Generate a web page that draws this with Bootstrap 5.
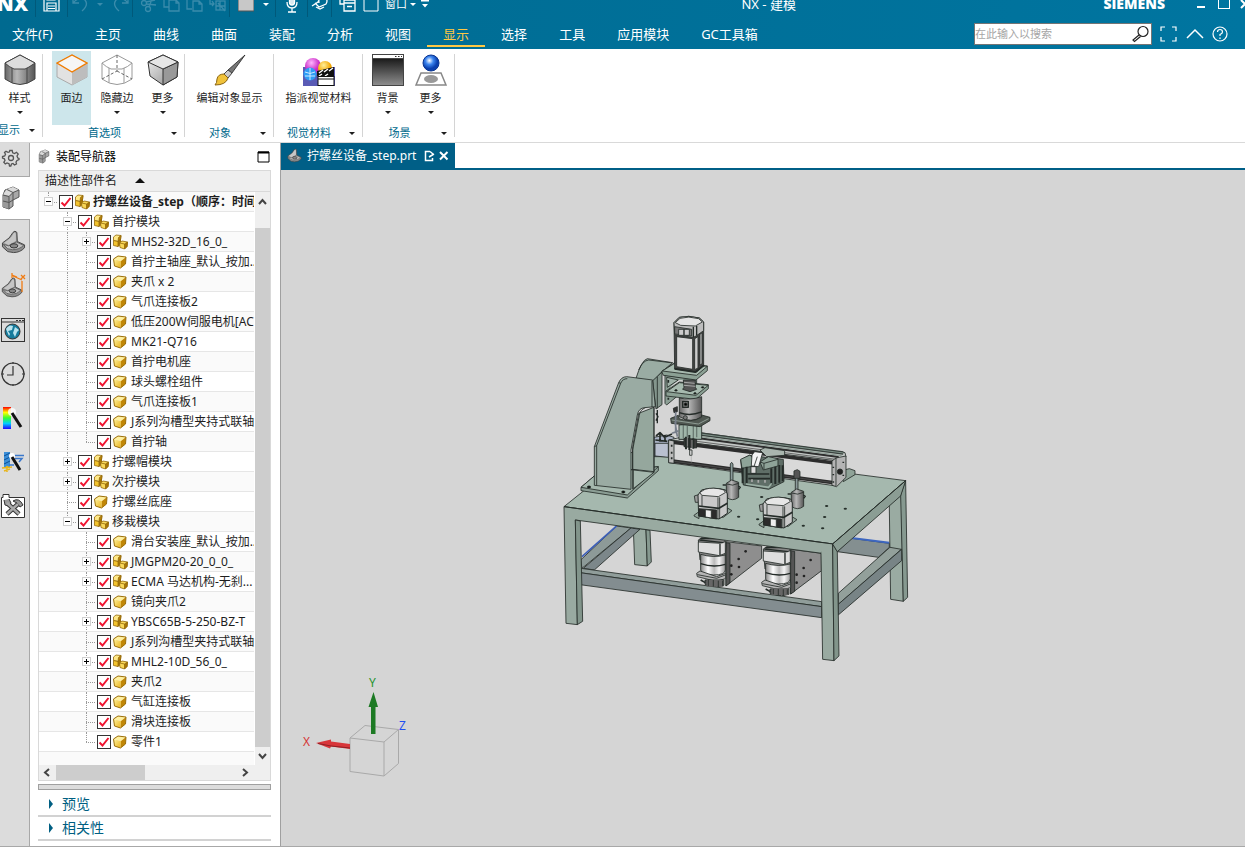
<!DOCTYPE html>
<html lang="zh-CN">
<head>
<meta charset="utf-8">
<meta name="viewport" content="width=device-width, initial-scale=1">
<title>NX - 建模</title>
<link href="https://cdn.jsdelivr.net/npm/bootstrap@5.3.0/dist/css/bootstrap.min.css" rel="stylesheet">
<style>
:root{--nx-teal:#006e94;--nx-deep:#005f87;--nx-gold:#ffc844;--nx-rail:#dcdcdc}
body{font-family:"Noto Sans","Noto Sans CJK SC",sans-serif;font-size:12px;line-height:16px;color:#1e1e1e;background:#fff;overflow:hidden}
button{font:inherit;color:inherit;background:none;border:0;padding:0}
svg{display:block;flex:none}
.app-shell{min-height:100vh}
.app-head{background:linear-gradient(90deg,#006a90,#0075a0);overflow:hidden;color:#fff}
.title-bar{height:30px;margin-top:-11px}
.brand-nx{font:800 20px/26px "Open Sans",sans-serif;width:34px;margin-left:-3px}
.brand-co{font:800 14px/16px "Open Sans",sans-serif}
.app-name{font-size:13px}
.q-sep{width:1px;height:20px;background:#00597a;align-self:flex-end}
.q-btn{width:23px;height:20px;display:flex;align-items:center;justify-content:center}
.q-btn.dim{color:#3a8cac}
.q-drop{width:18px}
.q-text{font-size:11px;width:28px}
.tiny-caret{width:0;height:0;border:3px solid transparent;border-top-color:currentColor;border-bottom:0}
.menu-bar{height:30px}
.menu-tab{color:#fff;font-size:13px;line-height:18px;height:28px;padding:6px 16px 2px;border-bottom:2px solid transparent;text-decoration:none;white-space:nowrap}
.menu-tab.first{padding-left:12px;width:79px}
.menu-tab.on{color:var(--nx-gold);border-color:var(--nx-gold)}
.find-box{width:178px;height:22px;background:#fff;border:1px solid #757575}
.find-box input{border:0;padding:0;font-size:11px;min-width:0;outline:0;color:#333}
.find-box input::placeholder{color:#a5a5a5;opacity:1}
.menu-tools{padding-right:17px}
.ribbon{height:94px;border-bottom:1px solid #d9d9d9;padding-top:2px}
.r-group{height:87px;position:relative}
.r-group::after{content:"";width:1px;background:#d4d4d4;position:absolute;right:0;top:3px;bottom:1px}
.g-a{width:43px}.g-b{width:142px}.g-c{width:89px}.g-d{width:92px}
.r-btn{height:74px;padding-top:3px;font-size:11px;display:flex;flex-direction:column;align-items:center;white-space:nowrap;min-width:39px}
.r-btn.wide{width:46px}
.r-btn span{margin-top:4px}
.r-btn i{margin-top:5px}
.r-btn.on{background:#cde6eb}
.r-row{gap:3px;padding-left:9px}
.r-row.tight{gap:4px;padding-left:5px}
.r-foot{color:#00698c;font-size:11px;height:16px;line-height:16px;white-space:nowrap}
.r-foot span{padding-right:5px}
.r-foot i{color:#1e1e1e;margin-right:8px}
.g-a .r-btn{width:39px}
.g-a .r-foot span{margin-left:-2px}
.rail{width:30px;background:var(--nx-rail);border-right:1px solid #a8a8a8}
.rail-btn{height:44px;width:29px;display:flex;align-items:center;padding-left:1px}
.rail-btn.top{height:34px;border-bottom:1px solid #a8a8a8;padding-bottom:3px}
.rail-btn.on{background:#fff;height:43px;width:30px;border-bottom:1px solid #a8a8a8}
.side{width:251px;border-right:1px solid #a0a0a0;padding:0 9px 0 8px}
.side-title{height:27px;gap:6px;color:#000}
.tree-box{border:1px solid #d9d9d9}
.tree-head{height:21px;background:#efefef;border-bottom:1px solid #d9d9d9;padding:0 6px;gap:18px}
.tree-list{min-width:0;background:#fafafa;overflow:hidden}
.t-row{height:20px;border-bottom:1px solid #e6e6e6;background:#fff;white-space:nowrap;overflow:hidden}
.t-row:nth-child(odd){background:#fafafa}
.t-cell{width:19px;height:20px;flex:none;position:relative;display:flex;align-items:center;justify-content:center}
.t-cell.v::before,.t-cell.l::before{content:"";position:absolute;left:9px;top:0;bottom:0;border-left:1px dotted #9a9a9a}
.t-cell.l::before{bottom:10px}
.t-cell.h::after{content:"";position:absolute;left:9px;right:1px;top:10px;border-top:1px dotted #9a9a9a}
.t-exp{width:9px;height:9px;background:#fff;border:1px solid #d0d0d0;position:relative;z-index:1;display:flex;align-items:center;justify-content:center}
.t-check{appearance:none;width:14px;height:14px;flex:none;margin:0 1px;border:1px solid #333;background:#fff}
.t-check:checked{background:#fff url("data:image/svg+xml,%3Csvg xmlns='http://www.w3.org/2000/svg' viewBox='0 0 12 12'%3E%3Cpath d='M1.5 6.5 4.5 9.5 10.5 2' fill='none' stroke='%23f0142f' stroke-width='2'/%3E%3C/svg%3E") center/12px no-repeat}
.t-row label{margin-left:3px}
.t-row.root{font-weight:700}
.v-scroll{width:17px;background:#efefef;height:573px;border-left:1px solid #fff}
.v-thumb{width:15px;height:519px;background:#cdcdcd}
.h-scroll{height:15px;background:#efefef;padding:0 3px}
.h-thumb{width:89px;height:15px;background:#cdcdcd}
.arrow-cell{width:14px;height:18px;display:flex;align-items:center;justify-content:center}
.splitter{height:6px;background:var(--nx-rail);border:1px solid #a0a0a0;margin:3px 0}
.fold{height:24px;font-size:14px;line-height:20px;color:#005f82;border-bottom:2px solid #d2d2d2;padding-left:10px}
.doc-tab{background:var(--nx-deep);color:#fff;width:174px;height:25px;padding-left:6px}
.doc-bar{border-bottom:2px solid var(--nx-deep)}
.scene{background:#d5d5d5;border-bottom:1px solid #a8a8a8;min-height:0}
.scene svg{width:100%;height:100%}
.work{margin-bottom:12px}
.work-left{border-bottom:1px solid #a8a8a8}
</style>
</head>
<body>
<svg width="0" height="0" class="position-absolute" aria-hidden="true">
<defs>
<linearGradient id="gold" x1="0" y1="0" x2="1" y2="1"><stop offset="0" stop-color="#fff3a0"/><stop offset="1" stop-color="#e9b21c"/></linearGradient>
<linearGradient id="steel" x1="0" y1="0" x2="1" y2="0"><stop offset="0" stop-color="#666"/><stop offset=".4" stop-color="#b8b8b8"/><stop offset="1" stop-color="#555"/></linearGradient>
<linearGradient id="chrome" x1="0" y1="0" x2="1" y2="0"><stop offset="0" stop-color="#888"/><stop offset=".3" stop-color="#fff"/><stop offset=".55" stop-color="#bbb"/><stop offset=".75" stop-color="#f4f4f4"/><stop offset="1" stop-color="#999"/></linearGradient>
<linearGradient id="cub" x1="0" y1="0" x2="1" y2="1"><stop offset="0" stop-color="#f2f2f2"/><stop offset="1" stop-color="#8c8c8c"/></linearGradient>
<linearGradient id="night" x1="0" y1="0" x2="0" y2="1"><stop offset="0" stop-color="#1c1c1c"/><stop offset="1" stop-color="#8d8d8d"/></linearGradient>
<linearGradient id="hue" x1="0" y1="0" x2="0" y2="1"><stop offset="0" stop-color="#f00"/><stop offset=".25" stop-color="#ff0"/><stop offset=".5" stop-color="#3f3"/><stop offset=".75" stop-color="#0cf"/><stop offset="1" stop-color="#20f"/></linearGradient>
<radialGradient id="ballb" cx=".4" cy=".35"><stop offset="0" stop-color="#fff"/><stop offset=".5" stop-color="#3b84ee"/><stop offset="1" stop-color="#0a3fae"/></radialGradient>
<radialGradient id="ballp" cx=".4" cy=".3"><stop offset="0" stop-color="#ffb5ff"/><stop offset="1" stop-color="#c92bc4"/></radialGradient>
<radialGradient id="bally" cx=".4" cy=".3"><stop offset="0" stop-color="#fff09a"/><stop offset="1" stop-color="#f3a500"/></radialGradient>
<symbol id="part" viewBox="0 0 16 16"><path d="M1.500 5 6 2 14 3 9 7Z" fill="#fff0a0"/><path d="M1.500 5 9 7 8.500 14 2.500 12Z" fill="url(#gold)"/><path d="M9 7 14 3 13.500 10 8.500 14Z" fill="#c08606"/><path d="M1.500 5 6 2 14 3 13.500 10 8.500 14 2.500 12Z" fill="none" stroke="#9b6e08"/></symbol>
<symbol id="kit" viewBox="0 0 16 16"><g stroke="#94690a" stroke-width=".8"><path d="M1.500 3 4 1 9 1.500 8.500 5.500 6 7.500 1.500 6.500Z" fill="#ffe987"/><path d="M6.500 3.500 9 1.500 8.500 5.500 6 7.500Z" fill="#b98308"/><path d="M1.500 6.500 6 7.500 8.500 5.500 8.500 10 6 12.500 1.500 11.500Z" fill="#f3c42f"/><path d="M6 7.500 8.500 5.500 8.500 10 6 12.500Z" fill="#a87605"/><path d="M7.500 9 10 7 15.500 8 15 12.500 12.500 15 8 13.500Z" fill="#f9d758"/><path d="M12.500 10 15.500 8 15 12.500 12.500 15Z" fill="#a87605"/><path d="M7.500 9 12.500 10" fill="none"/></g></symbol>
<symbol id="clip" viewBox="0 0 26 26"><path d="M1.500 14Q10 9 12.500 3 14.500 .5 16.500 3L17 12.500 24.500 16 24.500 19Q20 24 13 24L7 23 1.500 18Z" fill="#8f8f8f" stroke="#444"/><path d="M3 14Q11 9 13 4 15 2 15.500 5V12L8 16Z" fill="#c6c6c6"/><path d="M2.500 15.500 8 17 16 13 23.500 16.500Q19 21 12 21L7 20Z" fill="#c0c0c0" stroke="#555" stroke-width=".8"/><ellipse cx="13.500" cy="17" rx="4" ry="2.200" fill="#888" stroke="#333"/></symbol>
<symbol id="blocks" viewBox="0 0 20 24"><path d="M2 9 2 21 8 23 12 20 12 14 18 11 18 4 12 1 4 4Z" fill="#a8a8a8" stroke="#555"/><path d="M2 9 8 10.500 8 23 2 21Z" fill="#9a9a9a"/><path d="M2 8.500 6 3 12 1 18 4 12 6.500 8 10Z" fill="#dadada"/><path d="M2 9 8 10.500 12 6.500 18 4M8 10.500V23M2 15 8 16.500 12 14V6.500M6 3.500 12 6.500" fill="none" stroke="#555"/></symbol>
</defs>
</svg>

<div class="app-shell d-flex flex-column">
<header class="app-head">
  <div class="title-bar d-flex align-items-center">
    <div class="d-flex align-items-center">
      <span class="brand-nx">NX</span><span class="q-sep ms-1"></span>
      <button class="q-btn mx-1" aria-label="保存"><svg width="17" height="18" viewBox="0 0 17 18" fill="none" stroke="#fff" stroke-width="1.200"><path d="M1 1H14L16 3V16H1ZM4 8H13V16H4ZM5 11H12M5 13.500H12M4 1V5H12V1"/></svg></button>
      <span class="q-sep"></span>
      <button class="q-btn dim" aria-label="撤消"><svg width="18" height="18" viewBox="0 0 18 18" fill="none" stroke="currentColor" stroke-width="1.300"><path d="M2 2V8H8M2 8Q8 1 14 5Q18 10 11 16"/></svg></button>
      <button class="q-btn q-drop dim" aria-label="撤消列表"><i class="tiny-caret"></i></button>
      <button class="q-btn dim" aria-label="重做"><svg width="18" height="18" viewBox="0 0 18 18" fill="none" stroke="currentColor" stroke-width="1.300"><path d="M16 2V8H10M16 8Q10 1 4 5Q0 10 7 16"/></svg></button>
      <span class="q-sep"></span>
      <button class="q-btn dim ms-1" aria-label="剪切"><svg width="17" height="18" viewBox="0 0 17 18" fill="none" stroke="currentColor" stroke-width="1.300"><circle cx="4" cy="8" r="2.500"/><circle cx="8" cy="14" r="2.500"/><path d="M6 9 16 10M9 12 12 4M6 7 15 5"/></svg></button>
      <button class="q-btn dim" aria-label="复制"><svg width="18" height="18" viewBox="0 0 18 18" fill="none" stroke="currentColor" stroke-width="1.300"><path d="M6 12H1V1H8L11 4M6 5H13L16 8V16H6ZM13 5V8H16"/></svg></button>
      <button class="q-btn dim" aria-label="粘贴"><svg width="18" height="18" viewBox="0 0 18 18" fill="none" stroke="currentColor" stroke-width="1.300"><path d="M6 14H1V2H12V5M7 6H13L16 9V16H7ZM13 6V9H16M4 0H9V3H4Z"/></svg></button>
      <button class="q-btn dim" aria-label="移动"><svg width="18" height="18" viewBox="0 0 18 18" fill="none" stroke="currentColor" stroke-width="1.300"><path d="M1 2V9H5M3 6 5 9 3 11"/><rect x="7" y="6" width="9" height="9"/><path d="M7 11H16M11 6V15M9 8 16 16"/></svg></button>
      <span class="q-sep"></span>
      <button class="q-btn ms-1" aria-label="颜色"><svg width="16" height="18"><rect width="16" height="16" fill="#c8c8c8" stroke="#555"/></svg></button>
      <button class="q-btn q-drop" aria-label="颜色列表"><i class="tiny-caret"></i></button>
      <span class="q-sep"></span>
      <button class="q-btn mx-1" aria-label="语音"><svg width="14" height="18" viewBox="0 0 14 18" fill="none" stroke="#fff" stroke-width="1.300"><rect x="4.500" y="0" width="5" height="10" rx="2.500" fill="#d8e8ee"/><path d="M2 7Q2 13 7 13Q12 13 12 7M7 13V17M3 17H11"/></svg></button>
      <span class="q-sep"></span>
      <button class="q-btn" aria-label="触控"><svg width="18" height="18" viewBox="0 0 18 18" fill="none" stroke="#fff" stroke-width="1.300"><path d="M1 11 7 7 9 3M8 8Q7 1 12 2Q18 4 15 9L8 12 4 8M5 12 9 14 13 12" /></svg></button>
      <span class="q-sep"></span>
      <button class="q-btn ms-1" aria-label="切换窗口"><svg width="17" height="18" viewBox="0 0 17 18" fill="none" stroke="#fff" stroke-width="1.300"><path d="M5 9H1V0H14V5M5 5H16V16H5ZM5 8H16M8 11.500H13"/></svg></button>
      <button class="q-btn" aria-label="新窗口"><svg width="16" height="18" fill="none" stroke="#fff"><path d="M1 1H15V16H1ZM1 4H15"/></svg></button>
      <button class="q-text">窗口</button>
      <i class="tiny-caret"></i>
      <button class="q-btn q-drop" aria-label="自定义"><svg width="8" height="10" viewBox="0 0 8 10"><path d="M0 1H8V2.500H0ZM1 5H7L4 8.500Z" fill="#fff"/></svg></button>
    </div>
    <div class="app-name flex-grow-1 text-center">NX - 建模</div>
    <div class="d-flex align-items-center">
      <span class="brand-co">SIEMENS</span>
      <button class="q-btn ms-4" aria-label="最小化"><svg width="10" height="10"><rect x="1" y="7" width="8" height="2" fill="#fff"/></svg></button>
      <button class="q-btn me-1" aria-label="最大化"><svg width="12" height="12"><rect x=".5" y=".5" width="11" height="10" fill="none" stroke="#fff"/></svg></button>
      <button aria-label="关闭"><svg width="6" height="12"><path d="M2 2 6 6 2 10" fill="none" stroke="#fff" stroke-width="2"/></svg></button>
    </div>
  </div>
  <nav class="menu-bar d-flex align-items-start">
    <a class="menu-tab first" href="#">文件(F)</a><a class="menu-tab" href="#">主页</a><a class="menu-tab" href="#">曲线</a><a class="menu-tab" href="#">曲面</a><a class="menu-tab" href="#">装配</a><a class="menu-tab" href="#">分析</a><a class="menu-tab" href="#">视图</a><a class="menu-tab on" href="#">显示</a><a class="menu-tab" href="#">选择</a><a class="menu-tab" href="#">工具</a><a class="menu-tab" href="#">应用模块</a><a class="menu-tab" href="#">GC工具箱</a>
    <div class="menu-tools ms-auto d-flex align-items-center mt-1 gap-2">
      <div class="find-box d-flex align-items-center">
        <input class="flex-grow-1" type="text" aria-label="搜索" placeholder="在此输入以搜索">
        <svg width="20" height="18" viewBox="0 0 20 18" fill="none" stroke="#222" stroke-width="1.200"><circle cx="12" cy="6.500" r="5"/><path d="M8 10 2 15 3.500 16.500 9.500 11.500"/></svg>
      </div>
      <button aria-label="全屏"><svg width="18" height="18" fill="none" stroke="#fff" stroke-width="1.200"><path d="M1 6V2H5M12 2H16V6M16 12V16H12M5 16H1V12"/></svg></button>
      <button aria-label="收起功能区"><svg width="18" height="18" fill="none" stroke="#fff" stroke-width="1.500"><path d="M1 13 9 5 17 13"/></svg></button>
      <button aria-label="帮助"><svg width="16" height="18" fill="none" stroke="#fff" stroke-width="1.200"><circle cx="8" cy="9" r="7"/><path d="M5.500 7Q5.500 4.500 8 4.500T10.500 7Q10.500 8.500 8 9.500V11M8 12.500V14"/></svg></button>
    </div>
  </nav>
</header>

<section class="ribbon d-flex">
  <div class="r-group g-a d-flex flex-column overflow-hidden">
    <button class="r-btn"><svg width="32" height="32" viewBox="0 0 32 32"><path d="M1 9 16 1 31 9V25Q16 36 1 25Z" fill="url(#steel)" stroke="#444"/><path d="M1 9 16 1 31 9Q24 14 21 15H10Q5 13 1 9Z" fill="#ddd" stroke="#444"/><path d="M8 14V29M23 14V29" stroke="#444"/></svg><span>样式</span><i class="tiny-caret"></i></button>
    <div class="r-foot d-flex align-items-center justify-content-between"><span>显示</span><i class="tiny-caret"></i></div>
  </div>
  <div class="r-group g-b">
    <div class="r-row d-flex">
      <button class="r-btn on"><svg width="32" height="32" viewBox="0 0 32 32"><path d="M1 9 16 1 31 9V23L16 31 1 23Z" fill="#e2e2e2" stroke="#aaa"/><path d="M16 18V31L31 23V9Z" fill="#bdbdbd"/><path d="M1 9 16 1 31 9 16 18Z" fill="#f6f6f6" stroke="#f07c00" stroke-width="1.400"/></svg><span>面边</span></button>
      <button class="r-btn wide"><svg width="32" height="32" viewBox="0 0 32 32" fill="none" stroke="#999"><path d="M1 9 16 1 31 9V25Q16 36 1 25ZM1 9Q5 13 10 15H21Q27 13 31 9M8 14V29M23 14V29"/><path d="M16 1V17L1 25M16 17 31 25" stroke-dasharray="3 2" stroke="#666"/></svg><span>隐藏边</span><i class="tiny-caret"></i></button>
      <button class="r-btn"><svg width="32" height="32" viewBox="0 0 32 32" stroke="#333"><path d="M1 8 16 1 31 8 30 23 16 31 3 22Z" fill="url(#cub)"/><path d="M16 15 31 8 30 23 16 31Z" fill="#999"/><path d="M1 8 16 1 31 8 16 15Z" fill="#e6e6e6"/></svg><span>更多</span><i class="tiny-caret"></i></button>
    </div>
    <div class="r-foot d-flex align-items-center"><span class="flex-grow-1 text-center">首选项</span><i class="tiny-caret"></i></div>
  </div>
  <div class="r-group g-c">
    <button class="r-btn mx-auto"><svg width="32" height="32" viewBox="0 0 32 32"><path d="M31 1 18 19 14 16Z" fill="#777" stroke="#222" stroke-width=".8"/><path d="M14 16 18 19 14 24 10 20Z" fill="#c9c9c9" stroke="#444"/><path d="M10 20 14 24Q12 31 1 31Q3 29 3 25Q4 20 10 20Z" fill="#f0c23a" stroke="#8a6410"/></svg><span>编辑对象显示</span></button>
    <div class="r-foot d-flex align-items-center"><span class="flex-grow-1 text-center">对象</span><i class="tiny-caret"></i></div>
  </div>
  <div class="r-group g-c">
    <button class="r-btn mx-auto"><svg width="32" height="32" viewBox="0 0 32 32"><rect y="13" width="32" height="19" fill="#5a5bb5"/><circle cx="10" cy="12" r="8" fill="url(#ballp)"/><circle cx="22" cy="14" r="7" fill="url(#bally)"/><circle cx="7" cy="20" r="6.500" fill="#2e9cf5"/><path d="M2 18Q7 21 12 18M7 14V26M2 22H12" stroke="#cbeaff" fill="none"/><path d="M14 17 31 13V22H14Z" fill="#111"/><path d="M16 19 20 16M21 18 25 15M26 17 30 14M16 22 19 20M22 22 25 20" stroke="#fff" stroke-width="1.500"/><rect x="15" y="22.500" width="16" height="9" fill="#fff" stroke="#111"/><path d="M15 25H31" stroke="#111"/></svg><span>指派视觉材料</span></button>
    <div class="r-foot d-flex align-items-center"><span class="flex-grow-1 text-center">视觉材料</span><i class="tiny-caret"></i></div>
  </div>
  <div class="r-group g-d">
    <div class="r-row tight d-flex">
      <button class="r-btn"><svg width="32" height="32"><rect width="32" height="32" fill="#444"/><rect x="1" y="1" width="30" height="3" fill="#fff"/><path d="M23 2.500H24.500M26 2.500H27.500M29 2.500H30" stroke="#333"/><rect x="1" y="5" width="30" height="26" fill="url(#night)"/></svg><span>背景</span><i class="tiny-caret"></i></button>
      <button class="r-btn"><svg width="32" height="32"><path d="M6 19H26L31 31H1Z" fill="#fff" stroke="#888" stroke-width="1.500"/><ellipse cx="16" cy="25" rx="7" ry="4" fill="#999"/><circle cx="16" cy="9" r="8" fill="url(#ballb)" stroke="#0a3590"/></svg><span>更多</span><i class="tiny-caret"></i></button>
    </div>
    <div class="r-foot d-flex align-items-center"><span class="flex-grow-1 text-center">场景</span><i class="tiny-caret"></i></div>
  </div>
</section>

<main class="work d-flex flex-grow-1">
  <div class="work-left d-flex">
  <aside class="rail">
    <button class="rail-btn top" aria-label="设置"><svg width="22" height="22" viewBox="0 0 22 22" fill="none" stroke="#555" stroke-width="1.300"><circle cx="10" cy="11" r="2.500"/><path d="M8.800 3.500H11.200L11.700 5.800 13.600 6.600 15.500 5.300 17.200 7 16 9 16.800 11 18 11.500V12.500L16 13.500 15 15.200 15.500 17 13.500 18 12 16.500 10.500 17 9.800 19H8.500L8 16.700 6 16 4.300 17 2.800 15.300 4 13.500 3.400 11.800 1.500 11V9.500L3.700 9 4.500 7.200 3.500 5.500 5 4.200 7 5.400 8.300 5Z"/></svg></button>
    <button class="rail-btn on" aria-label="装配导航器"><svg width="22" height="24"><use href="#blocks" width="20" height="24"/></svg></button>
    <button class="rail-btn" aria-label="部件导航器"><svg width="25" height="26"><use href="#clip" width="25" height="26"/></svg></button>
    <button class="rail-btn" aria-label="重用库"><svg width="26" height="28"><use href="#clip" y="3" width="22" height="25"/><path d="M12 4 21 8M20 3 24 7M24 3 20 7M21 9V20M11 1V6M11 3 16 5" stroke="#f07c14" stroke-width="1.300" fill="none"/></svg></button>
    <button class="rail-btn" aria-label="浏览器"><svg width="24" height="24" fill="none" stroke="#333"><rect x=".5" y=".5" width="23" height="23"/><path d="M0 4H24M15 2.500H17M18 2.500H20M21 2.500H23"/><circle cx="11.500" cy="13.500" r="7.500" fill="#167b9c" stroke="#333"/><path d="M5 11Q8 6 12 8L11 12 7 13 9 16 8 18M14 9 18 12 16 14 14 19 12 15Z" fill="#b9e4ef" stroke="none"/></svg></button>
    <button class="rail-btn" aria-label="历史记录"><svg width="24" height="24" fill="none" stroke="#333" stroke-width="1.200"><circle cx="12" cy="12" r="11"/><path d="M12 4V13H6M12 0V2M12 22V24M0 12H3M21 12H24"/></svg></button>
    <button class="rail-btn" aria-label="颜色"><svg width="24" height="24"><rect x="2" y="1" width="8" height="22" fill="url(#hue)"/><circle cx="11" cy="6" r="4" fill="#fff" opacity=".8"/><path d="M11 7 20 21" stroke="#111" stroke-width="3"/></svg></button>
    <button class="rail-btn" aria-label="加工向导"><svg width="24" height="24"><rect x="3" y="2" width="6" height="15" fill="#3c8fd8"/><path d="M3 6 9 3M3 10 9 7M3 14 9 11" stroke="#0a4f97"/><path d="M12 5.500H23M14 8.500H21L18 12M8 15H13" stroke="#3a77cb" fill="none" stroke-width="1.500"/><path d="M1 18 11 17M3 21 9 19M6 16V22" stroke="#e8b51a" stroke-width="1.500"/><circle cx="11" cy="6" r="3" fill="#fff"/><path d="M11 7 19 20" stroke="#111" stroke-width="3"/></svg></button>
    <button class="rail-btn" aria-label="工具"><svg width="24" height="24" fill="none"><path d="M.5 23.500V3.500H2V.500H8V3.500H23.500V23.500Z" fill="#fff" stroke="#333"/><path d="M6 9 18 20M17 10 6 20" stroke="#333" stroke-width="4.500"/><path d="M3 6 4 11 8 12 10 9 8 5" fill="#999" stroke="#333"/><path d="M12 7Q18 3 22 11L19 13 16 9Z" fill="#999" stroke="#333"/><path d="M6 9 18 20M17 10 6 20" stroke="#aaa" stroke-width="2.500"/></svg></button>
  </aside>
  <section class="side">
    <div class="side-title d-flex align-items-center">
      <svg width="12" height="16"><use href="#blocks" width="12" height="15"/></svg><span class="flex-grow-1">装配导航器</span>
      <button aria-label="最大化面板"><svg width="14" height="12"><path d="M1 1H12V11H1Z" fill="none" stroke="#000"/><path d="M1 1.500H12" stroke="#000" stroke-width="2"/></svg></button>
    </div>
    <div class="tree-box">
      <div class="tree-head d-flex align-items-center"><span>描述性部件名</span><svg width="10" height="6"><path d="M0 5H10L5 0Z" fill="#111"/></svg></div>
      <div class="d-flex">
        <div class="tree-list flex-grow-1" id="tree"></div>
        <div class="v-scroll d-flex flex-column">
          <div class="arrow-cell"><svg width="9" height="7"><path d="M1 6 4.500 2 8 6" fill="none" stroke="#444" stroke-width="2"/></svg></div>
          <div class="v-thumb mt-auto"></div>
          <div class="arrow-cell"><svg width="9" height="7"><path d="M1 1 4.500 5 8 1" fill="none" stroke="#444" stroke-width="2"/></svg></div>
        </div>
      </div>
      <div class="h-scroll d-flex">
        <svg width="14" height="15"><path d="M7 4 3 7.500 7 11" fill="none" stroke="#444" stroke-width="2"/></svg>
        <div class="h-thumb"></div>
        <svg class="ms-auto me-3" width="14" height="15"><path d="M6 4 10 7.500 6 11" fill="none" stroke="#444" stroke-width="2"/></svg>
      </div>
    </div>
    <div class="splitter"></div>
    <button class="fold w-100 d-flex align-items-center gap-2"><svg width="6" height="10"><path d="M1 0V10L5 5Z" fill="#005f82"/></svg><span>预览</span></button>
    <button class="fold w-100 d-flex align-items-center gap-2"><svg width="6" height="10"><path d="M1 0V10L5 5Z" fill="#005f82"/></svg><span>相关性</span></button>
  </section>
  </div>

  <section class="flex-grow-1 d-flex flex-column">
    <div class="doc-bar d-flex">
      <div class="doc-tab d-flex align-items-center"><svg width="16" height="16" class="me-1"><use href="#clip" width="15" height="15"/></svg><span>拧螺丝设备_step.prt</span>
        <svg width="11" height="12" class="ms-2" fill="none" stroke="#fff" stroke-width="1.500"><path d="M6 1.500H1.500V10.500H8.500V8M6 1.500 9 4V5M5 7 10 4"/></svg>
        <button class="ms-1" aria-label="关闭文档"><svg width="10" height="10"><path d="M1 1 8.500 8.500M8.500 1 1 8.500" stroke="#fff" stroke-width="2"/></svg></button></div>
    </div>
    <div class="scene flex-grow-1">
<svg viewBox="281 170 964 676" preserveAspectRatio="xMidYMid meet" role="img" aria-label="拧螺丝设备模型">
<defs>
<g id="motor-low">
  <path d="M445 240 455 233H522L528 250V262L525 288 518 300 450 300Z" fill="#888"/>
  <path d="M445 246 510 250 526 245V280L508 287 445 276Z" fill="#dedede"/>
  <path d="M510 252V285M448 240 520 248M452 236H522" stroke-width="4"/>
  <path d="M452 283Q490 295 526 285V330Q526 345 490 345T452 330Z" fill="url(#chrome)"/>
  <path d="M452 311Q490 324 526 313" fill="none" stroke-width="4"/>
  <path d="M440 340 450 333 500 350 527 340V356L498 364 442 350Z" fill="#b5b5b5"/><path d="M442 344 500 355 526 345" fill="none"/>
  <path d="M465 360H522V376L495 382 465 373Z" fill="#555"/><path d="M473 362V376M487 364V380M500 364V380" stroke="#bbb"/>
  <path d="M452 360 466 368" stroke-width="5"/>
</g>
<g id="motor-top">
  <path d="M432 166 447 155V176L432 168ZM534 145 546 152 520 172H505Z" fill="#93a59b"/>
  <path d="M433 108 446 104V127H436Z" fill="#9b9b9b"/>
  <path d="M444 105 455 90Q490 80 527 90L532 102V160L507 177 446 168Z" fill="#c9c9c9" stroke-width="3"/>
  <path d="M450 97 465 88Q490 80 522 90L526 98 505 110 455 106Z" fill="#e6e6e6"/>
  <path d="M446 138 507 145 532 130" fill="none" stroke-width="5"/>
  <path d="M447 146 500 150V177L447 168Z" fill="#2b2b2b"/><path d="M466 149 484 151V174L466 171Z" fill="#eee"/>
  <path d="M504 112V177M509 112V177M456 108V140" fill="none"/>
</g>
<g id="post">
  <path d="M541 12 545 7 549 12V66H541Z" fill="#8c9c9c"/><path d="M529 70 545 60 566 67V112Q548 126 529 112Z" fill="url(#steel)"/><path d="M530 72Q548 80 566 70" fill="none"/><path d="M565 78 571 82 566 88M518 75H528" fill="none" stroke-width="4"/>
</g>
</defs>
<g transform="translate(550 300) scale(.3333)" stroke="#242b28" stroke-width="2.500" stroke-linejoin="round">
 <g transform="translate(0 480)">
  <path d="M250 203 288 209 292 318 254 314Z" fill="#9aaba2"/><path d="M288 209 300 211 304 306 292 318Z" fill="#869990"/>
  <path d="M92 300 200 198 243 204 96 325Z" fill="#8d9a98"/><path d="M243 204 270 208 133 330 100 325Z" fill="#7c878a"/>
  <path d="M96 290 200 198" stroke="#3d5fb8" stroke-width="5"/>
  <path d="M862 275 905 235 1018 250V262L985 292Z" fill="#848f90"/><path d="M905 234 1018 248" stroke="#3d66c0" stroke-width="6"/>
  <path d="M1018 135 1054 105 1060 424 1022 418Z" fill="#9aaba2"/><path d="M1052 105 1067 62 1073 412 1060 424Z" fill="#869990"/>
  <path d="M865 400 1020 262 1054 268 865 433Z" fill="#93a09b"/><path d="M865 433 1055 268V302L865 465Z" fill="#788486"/>
  <path d="M528 245 635 258V295L528 378Z" fill="#8e8e8e"/><path d="M722 268 815 280V332L722 402Z" fill="#8e8e8e"/>
  <path d="M528 248 540 250V368L528 378ZM722 272 734 274V394L722 402Z" fill="#555"/>
  <g fill="#222" stroke="none"><circle cx="587" cy="274" r="4"/><circle cx="566" cy="297" r="4"/><circle cx="544" cy="317" r="4"/><circle cx="567" cy="321" r="4"/><circle cx="544" cy="343" r="4"/><circle cx="782" cy="300" r="4"/><circle cx="761" cy="324" r="4"/><circle cx="740" cy="344" r="4"/><circle cx="762" cy="348" r="4"/><circle cx="740" cy="368" r="4"/></g>
  <use href="#motor-low"/><use href="#motor-low" x="195" y="27"/>
  <path d="M82 337 92 325 815 425V440Z" fill="#909d9a"/><path d="M82 337 815 440V473L82 373Z" fill="#838d90"/>
  <path d="M470 360H520V380H470ZM665 385H715V405H665Z" fill="#666" stroke="none"/><path d="M475 360V378M490 360V380M505 362V382M518 362V378M670 387V403M685 387V405M700 388V407M712 388V403"/>
  <path d="M42 140 268-41 1067 62 848 252Z" fill="#a5b8ae"/>
  <path d="M42 140 848 252 846 285 815 280 76 180 82 494 48 490Z" fill="#99aaa1"/>
  <path d="M76 180 91 183 98 484 82 494Z" fill="#82958b"/>
  <path d="M813 278 848 252 852 602 818 598Z" fill="#99aaa1" /><path d="M848 252 862 275 867 588 852 602Z" fill="#82958b"/>
  <path d="M814 280V250L846 252V282Z" fill="#99aaa1" stroke="none"/>
  <path d="M848 252 1067 62 1052 108 862 275Z" fill="#8b9d94"/><path d="M42 140 848 252 1067 62" fill="none"/>
  <g fill="#26302b" stroke="none"><ellipse cx="566" cy="170" rx="5" ry="3"/><ellipse cx="623" cy="178" rx="5" ry="3"/><ellipse cx="760" cy="197" rx="5" ry="3"/><ellipse cx="818" cy="205" rx="5" ry="3"/><ellipse cx="830" cy="138" rx="5" ry="3"/><ellipse cx="886" cy="146" rx="5" ry="3"/><ellipse cx="824" cy="171" rx="5" ry="3"/><ellipse cx="635" cy="111" rx="5" ry="3"/></g>
 </g>
 <!-- linear axis -->
 <path d="M875 512 898 506 915 512V524L880 545Z" fill="#8fa398"/>
 <path d="M312 412 350 405 372 412V470H312Z" fill="#a9b2c4"/><path d="M315 430H355V472L315 468Z" fill="#b9c0d0"/>
 <path d="M318 408 330 398 344 412 366 402M316 420 352 424M330 400V425M345 405V422" fill="none" stroke-width="5"/>
 <path d="M358 420 450 398 885 458 888 470 855 484Z" fill="#c4c8c6"/>
 <path d="M450 402 880 459" stroke="#39423e" stroke-width="10"/><path d="M450 402 880 459" stroke="#7f938a" stroke-width="3"/><path d="M425 412 866 471" stroke="#2e2e2e" stroke-width="6"/><path d="M450 410 875 467" stroke="#8a9c93" stroke-width="3"/><path d="M385 417 858 478" stroke="#555"/>
 <path d="M356 420 856 482 860 558 356 488Z" fill="#d9d9d9"/>
 <path d="M362 426 854 489" stroke="#2c2c2c" stroke-width="11"/><path d="M357 482 858 549" stroke="#2c2c2c" stroke-width="11"/><path d="M357 482 858 549" stroke="#666" stroke-width="1.500"/>
 <path d="M356 420 372 423V490L356 488Z" fill="#bcbcbc"/><path d="M365 434V440M365 455V461M365 472V478" stroke-width="5"/>
 <path d="M846 483 858 474 888 468V532L860 560 846 556Z" fill="#b4b4b4"/><path d="M858 474V558" /><circle cx="870" cy="515" r="8" fill="#222"/><path d="M850 500V504M850 522V526M850 544V548M880 485V489M880 524V528" stroke-width="5"/>
 <!-- carriage -->
 <path d="M572 480 598 466 700 478 702 545 656 568 580 555Z" fill="#5f6e67"/>
 <path d="M572 478 600 465 612 478V498L576 505Z" fill="#8ea398"/><path d="M630 486 655 470 684 476V498L640 510Z" fill="#8ea398"/><path d="M630 486 642 490 684 478M642 490V508" fill="none"/>
 <path d="M630 450 645 443 704 452V466L650 470Z" fill="#a9b5ae"/><path d="M606 465 614 455 638 458 626 500 604 498Z" fill="#f4f4f4"/><path d="M622 470 612 500M603 500H618V520H603Z" fill="#ddd"/>
 <path d="M578 503V550M590 500V550M664 505V555M676 500V552M688 495V548M698 496V544" stroke-width="6"/><path d="M592 522H658M595 536H660" stroke-width="5"/><path d="M606 538V546M625 540V548M645 540V548" stroke="#aaa" stroke-width="5"/><path d="M588 552 656 562 665 550" fill="none" stroke="#9bb0a5" stroke-width="5"/>
 <!-- column -->
 <path d="M93 562 140 522 325 500V512L232 594 93 572Z" fill="#8b9d94"/><path d="M93 562 140 522 325 500 232 585Z" fill="#a5b8ae"/>
 <ellipse cx="117" cy="561" rx="5" ry="3"/><ellipse cx="220" cy="576" rx="5" ry="3"/>
 <path d="M258 235Q275 180 292 176L368 188 335 216 308 245Z" fill="#9aaca3"/>
 <path d="M266 210Q278 182 296 180L362 188" fill="none"/>
 <path d="M308 242 336 216V314L318 327Z" fill="#84968d"/><path d="M322 230V325"/>
 <path d="M248 440 266 340 312 322V515L248 508Z" fill="#95a79d"/>
 <path d="M133 556V440L206 248Q214 230 230 230L308 240 316 320 284 323Q266 324 262 345L243 450V568Z" fill="#9aaba3"/>
 <path d="M133 440 140 437V556M206 248 212 250M248 568V450L268 346Q270 330 286 323M140 437 212 250Q218 236 232 236M306 242V322M312 322V518" fill="none"/>
 <path d="M250 510 312 517 250 566Z" fill="#a5b8ae"/>
 <path d="M318 340 324 350 318 362M322 330V370" fill="none" stroke-width="4"/>
 <!-- spindle head -->
 <path d="M345 226 440 238V280L380 290 350 315 345 310Z" fill="#8c9f95"/><path d="M385 240 440 242 400 262 384 275 360 262Z" fill="#d5d5d5" stroke="none"/><path d="M350 232 385 240 352 262Z" fill="#9fb2a8"/>
 <path d="M348 273 388 246 475 254V266L438 298 348 288Z" fill="#8ba094"/><path d="M350 275 388 248 475 256 438 286Z" fill="#a7baaf"/>
 <path d="M355 240V248M355 293V299" stroke-width="5"/><ellipse cx="378" cy="271" rx="4" ry="2"/><ellipse cx="458" cy="262" rx="4" ry="2"/><ellipse cx="435" cy="280" rx="4" ry="2"/>
 <path d="M400 240H436V262L440 268 420 275 398 268 402 262Z" fill="#555"/><path d="M402 247 434 250M402 256 436 259" stroke="#bbb"/>
 <path d="M335 214 374 188 472 198V212L438 240 340 226Z" fill="#8ba094"/><path d="M337 213 374 190 472 199 440 226Z" fill="#a7baaf"/>
 <path d="M372 68 388 52Q415 45 448 54L461 66V196L440 216 374 207Z" fill="#444"/>
 <path d="M380 110 428 116V208L380 200Z" fill="#d8d8d8"/><path d="M434 116 444 110V204L434 209ZM450 104 456 98V190L450 196Z" fill="#ccc"/>
 <path d="M372 68 388 52Q415 45 448 54L461 66V92L438 108 430 112 374 104Z" fill="#bdbdbd"/><path d="M376 68 390 55Q415 47 446 56L457 66 436 78 392 76Z" fill="#e4e4e4"/>
 <path d="M374 80 425 88V108L374 102Z" fill="#777"/><path d="M386 88H418V106H386Z" fill="#ccc"/><path d="M402 88V106M430 80V112M440 78V106" fill="none" stroke-width="4"/>
 <path d="M374 206 436 216 462 196" fill="none" stroke-width="6"/>
 <path d="M388 294Q420 302 455 290V350Q425 372 388 350Z" fill="url(#steel)"/><path d="M388 338Q420 350 455 336" fill="none" stroke-width="4"/>
 <path d="M398 304H415V322H398Z" fill="#777" stroke-width="4"/><circle cx="407" cy="313" r="4"/><circle cx="406" cy="353" r="6" fill="#777"/>
 <path d="M387 375V418H455V370Z" fill="#9fb5a9"/><path d="M400 375V415M412 378V415M430 378V415M440 375V412" stroke="#6a7a72" stroke-width="4"/>
 <path d="M362 355 385 346 388 356Q420 370 455 352L455 345 480 352V362L450 380 364 370Z" fill="#505852"/><path d="M365 360 445 372 476 356" stroke="#9aaaa1" fill="none"/>
 <path d="M370 325 382 320V335L372 338Z" fill="#333"/><path d="M377 335V400M366 400 386 392M375 365 382 410" stroke="#777e8a" fill="none" stroke-width="5"/>
 <path d="M402 415 440 418V444L402 440Z" fill="#3c3c3c"/><path d="M408 410V448M418 405V450M430 415V446" stroke-width="6"/><path d="M412 412V440M426 420V446" stroke="#999"/>
 <path d="M419 450H426V466H419Z" fill="#ddd"/><path d="M424 466V488" stroke="#999" stroke-width="1.500"/>
 <g transform="translate(0 480)"><use href="#post"/><use href="#post" x="195" y="27"/><path d="M732 33 742 29 750 34V55H732Z" fill="#555"/><use href="#motor-top"/><use href="#motor-top" x="195" y="27"/></g>
</g>
<!-- view triad -->
<g fill="none" stroke="#a9a9a9" stroke-width="1"><path d="M350 738 365 725.500 398.500 729.500 384 742ZM350 738V771.500L384 776V742M384 776 398.500 763.500V729.500"/></g>
<path d="M371 734V707H368.500L373.500 692 378 707H375.500V734Z" fill="#1d7a24"/>
<path d="M350 744 331 741.500V739.500L316 743 330 748.500 331 746.500 350 749Z" fill="#d8363a"/><path d="M350 748 331 746 318 743.500" stroke="#8f2025" fill="none"/>
<g font-family="Noto Sans, sans-serif" font-size="12"><text x="369" y="687" fill="#26932d">Y</text><text x="303" y="746" fill="#d63535">X</text><text x="399" y="730" fill="#1f4ff0">Z</text></g>
</svg>
    </div>
  </section>
</main>
</div>

<script>
// level, expander state ("-" open, "+" closed, "" leaf), name
const parts = [
  [0,"-","拧螺丝设备_step（顺序：时间顺序）"],[1,"-","首拧模块"],[2,"+","MHS2-32D_16_0_"],[2,"","首拧主轴座_默认_按加..."],
  [2,"","夹爪 x 2"],[2,"","气爪连接板2"],[2,"","低压200W伺服电机[AC"],[2,"","MK21-Q716"],[2,"","首拧电机座"],
  [2,"","球头螺栓组件"],[2,"","气爪连接板1"],[2,"","J系列沟槽型夹持式联轴器"],[2,"","首拧轴"],[1,"+","拧螺帽模块"],
  [1,"+","次拧模块"],[1,"","拧螺丝底座"],[1,"-","移栽模块"],[2,"","滑台安装座_默认_按加..."],[2,"+","JMGPM20-20_0_0_"],
  [2,"+","ECMA 马达机构-无刹..."],[2,"","镜向夹爪2"],[2,"+","YBSC65B-5-250-BZ-T"],[2,"","J系列沟槽型夹持式联轴器"],
  [2,"+","MHL2-10D_56_0_"],[2,"","夹爪2"],[2,"","气缸连接板"],[2,"","滑块连接板"],[2,"","零件1"]
];
const hasLater = (i, lv) => {
  for (let k = i + 1; k < parts.length; k++) {
    if (parts[k][0] < lv) return false;
    if (parts[k][0] === lv) return true;
  }
  return false;
};
document.getElementById("tree").innerHTML = parts.map(([lv, state, name], i) => {
  let cells = "";
  for (let c = 0; c < lv; c++) cells += `<span class="t-cell ${c && hasLater(i, c) ? "v" : ""}"></span>`;
  const sign = state ? `<button class="t-exp" aria-label="${state === "+" ? "展开" : "折叠"}"><svg width="7" height="7"><path d="M1 3.5H6${state === "+" ? "M3.5 1V6" : ""}" stroke="#000"/></svg></button>` : "";
  cells += `<span class="t-cell h ${hasLater(i, lv) ? "v" : "l"}">${sign}</span>`;
  return `<div class="t-row d-flex align-items-center${lv ? "" : " root"}">${cells}<input class="t-check" type="checkbox" id="p${i}" checked><svg width="16" height="16"><use href="#${state ? "kit" : "part"}"/></svg><label for="p${i}">${name}</label></div>`;
}).join("");
</script>
<script src="https://cdn.jsdelivr.net/npm/bootstrap@5.3.0/dist/js/bootstrap.bundle.min.js"></script>
</body>
</html>
